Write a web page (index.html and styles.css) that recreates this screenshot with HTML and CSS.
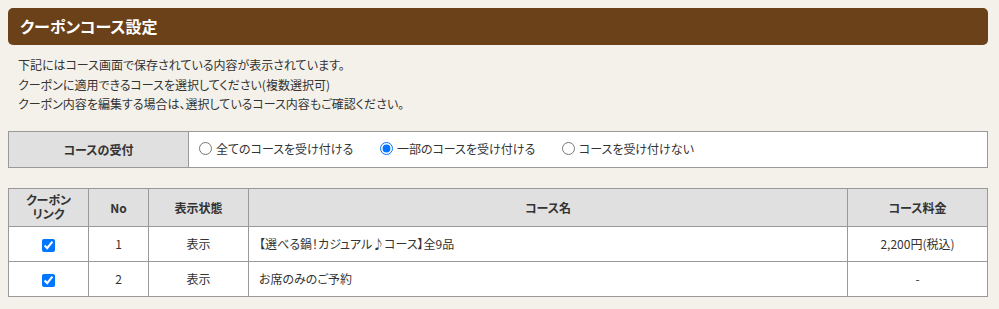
FILE: index.html
```html
<!DOCTYPE html>
<html lang="ja">
<head>
<meta charset="utf-8">
<link rel="stylesheet" href="styles.css">
</head>
<body>
<div class="page">
  <h1 class="title">クーポンコース設定</h1>
  <div class="notes">
    <p>下記にはコース画面で保存されている内容が表示されています。</p>
    <p>クーポンに適用できるコースを選択してください(複数選択可)</p>
    <p>クーポン内容を編集する場合は、選択しているコース内容もご確認ください。</p>
  </div>
  <table class="accept">
    <tr>
      <th class="accept-th">コースの受付</th>
      <td class="accept-td">
        <label class="radio"><input type="radio" name="acc">全てのコースを受け付ける</label>
        <label class="radio"><input type="radio" name="acc" checked>一部のコースを受け付ける</label>
        <label class="radio"><input type="radio" name="acc">コースを受け付けない</label>
      </td>
    </tr>
  </table>
  <table class="courses">
    <thead>
      <tr>
        <th class="c-link"><span class="hl">クーポン</span><span class="hl">リンク</span></th>
        <th class="c-no">No</th>
        <th class="c-state">表示状態</th>
        <th class="c-name">コース名</th>
        <th class="c-price">コース料金</th>
      </tr>
    </thead>
    <tbody>
      <tr>
        <td class="center"><input type="checkbox" checked></td>
        <td class="center">1</td>
        <td class="center">表示</td>
        <td class="name">【選べる鍋！カジュアル♪コース】全9品</td>
        <td class="center">2,200円(税込)</td>
      </tr>
      <tr>
        <td class="center"><input type="checkbox" checked></td>
        <td class="center">2</td>
        <td class="center">表示</td>
        <td class="name">お席のみのご予約</td>
        <td class="center">-</td>
      </tr>
    </tbody>
  </table>
</div>
</body>
</html>
```
FILE: styles.css
```css
html, body {
  margin: 0;
  background: #f4f1ea;
}
body {
  padding: 8px;
  font-family: "Noto Sans CJK JP", "Noto Sans", sans-serif;
  font-size: 12px;
  font-feature-settings: "palt";
  color: #333;
}
.page {
  width: 980px;
}
.title {
  margin: 0;
  height: 37px;
  line-height: 36px;
  background: #6a4119;
  border-radius: 5px;
  color: #fff;
  font-size: 16px;
  font-weight: bold;
  padding: 0 12px;
}
.notes {
  padding: 10px 0 0 10px;
  line-height: 19.5px;
}
.notes p {
  margin: 0;
}
table {
  border-collapse: collapse;
  width: 980px;
  background: #fff;
}
th, td {
  border: 1px solid #999;
  padding: 0;
}
th {
  background: #e0e0e0;
  font-weight: bold;
  color: #333;
}
.accept {
  margin-top: 17px;
}
.accept-th {
  width: 179px;
  height: 35px;
}
.accept-td {
  padding-left: 10px;
}
.radio {
  display: inline-flex;
  align-items: center;
  margin-right: 24px;
}
.radio input {
  margin: 0 4px 0 0;
  width: 13px;
  height: 13px;
}
.courses {
  margin-top: 20px;
}
.courses th {
  height: 37px;
}
.hl {
  display: block;
  height: 14px;
  line-height: 14px;
  overflow: visible;
}
.courses td {
  height: 34px;
}
.c-link { width: 79px; }
.c-no { width: 59px; }
.c-state { width: 99px; }
.c-price { width: 139px; }
.center {
  text-align: center;
}
.name {
  padding-left: 10px;
}
.courses input {
  margin: 0;
  width: 13px;
  height: 13px;
  vertical-align: middle;
}
```
